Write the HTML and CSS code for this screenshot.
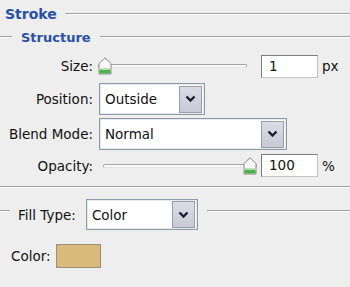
FILE: index.html
```html
<!DOCTYPE html>
<html lang="en">
<head>
    <meta charset="UTF-8">
    <title>Stroke</title>
    <link rel="stylesheet" href="styles.css">
</head>
<body>
    <div class="panel">
        <div class="group-title">
            <span>Stroke</span>
            <div class="rule"></div>
        </div>
        <div class="sub-title">
            <div class="rule lead"></div>
            <span>Structure</span>
            <div class="rule"></div>
        </div>

        <div class="row row-size">
            <label class="label">Size:</label>
            <div class="slider slider-size">
                <div class="track"></div>
                <svg class="thumb thumb-start" width="14" height="18" viewBox="0 0 14 18">
                    <path d="M7 0.8 L13 6.5 L13 17 L1 17 L1 6.5 Z" fill="#f6f6f6" stroke="#8a8a8a"/>
                    <rect x="1.5" y="12.5" width="11" height="4" fill="#4caf4a"/>
                    <rect x="1.5" y="11" width="11" height="1.5" fill="#bfe3b8"/>
                </svg>
            </div>
            <div class="num-box">1</div>
            <span class="unit">px</span>
        </div>

        <div class="row row-select">
            <label class="label">Position:</label>
            <div class="select select-position">
                <span>Outside</span>
                <div class="drop-btn">
                    <svg width="11" height="8" viewBox="0 0 11 8"><path d="M1.5 1.5 L5.5 5.5 L9.5 1.5" fill="none" stroke="#1a2030" stroke-width="2.4"/></svg>
                </div>
            </div>
        </div>

        <div class="row row-select row-blend">
            <label class="label">Blend Mode:</label>
            <div class="select select-blend">
                <span>Normal</span>
                <div class="drop-btn">
                    <svg width="11" height="8" viewBox="0 0 11 8"><path d="M1.5 1.5 L5.5 5.5 L9.5 1.5" fill="none" stroke="#1a2030" stroke-width="2.4"/></svg>
                </div>
            </div>
        </div>

        <div class="row row-opacity">
            <label class="label">Opacity:</label>
            <div class="slider slider-opacity">
                <div class="track"></div>
                <svg class="thumb thumb-end" width="14" height="18" viewBox="0 0 14 18">
                    <path d="M7 0.8 L13 6.5 L13 17 L1 17 L1 6.5 Z" fill="#f6f6f6" stroke="#8a8a8a"/>
                    <rect x="1.5" y="12.5" width="11" height="4" fill="#4caf4a"/>
                    <rect x="1.5" y="11" width="11" height="1.5" fill="#bfe3b8"/>
                </svg>
            </div>
            <div class="num-box">100</div>
            <span class="unit">%</span>
        </div>

        <div class="separator"></div>

        <div class="fill-row">
            <div class="rule lead"></div>
            <label class="fill-label">Fill Type:</label>
            <div class="select select-fill">
                <span>Color</span>
                <div class="drop-btn">
                    <svg width="11" height="8" viewBox="0 0 11 8"><path d="M1.5 1.5 L5.5 5.5 L9.5 1.5" fill="none" stroke="#1a2030" stroke-width="2.4"/></svg>
                </div>
            </div>
            <div class="rule"></div>
        </div>

        <div class="color-row">
            <label class="color-label">Color:</label>
            <div class="swatch"></div>
        </div>
    </div>
</body>
</html>
```

FILE: styles.css
```css
* {
    margin: 0;
    padding: 0;
    box-sizing: border-box;
}

body {
    background: #eeeeee;
    font-family: "DejaVu Sans", Verdana, sans-serif;
    font-size: 13.5px;
    color: #111111;
    width: 350px;
    height: 287px;
    overflow: hidden;
}

.panel {
    display: flex;
    flex-direction: column;
}

/* group headers */
.group-title,
.sub-title {
    display: flex;
    align-items: center;
    color: #2850a8;
    font-weight: bold;
}

.group-title {
    height: 28px;
    padding-left: 5px;
    font-size: 14px;
}

.group-title span {
    margin-right: 8px;
}

.sub-title {
    height: 18px;
    font-size: 13px;
}

.sub-title span {
    margin: 0 9px 0 9px;
}

.rule {
    flex: 1;
    height: 2px;
    border-top: 1px solid #a2a2a2;
    border-bottom: 1px solid #ffffff;
}

.rule.lead {
    flex: none;
    width: 12px;
}

/* form rows */
.row {
    display: flex;
    align-items: center;
}

.label {
    width: 93px;
    text-align: right;
    flex: none;
}

.row-size {
    height: 24px;
    margin-top: 8px;
}

.row-select {
    height: 32px;
    margin-top: 5px;
}

.row-blend {
    margin-top: 3px;
}

.row-opacity {
    height: 23px;
    margin-top: 4px;
}

.slider {
    position: relative;
    height: 18px;
    display: flex;
    align-items: center;
}

.slider-size {
    width: 149px;
    margin-left: 5px;
    margin-right: 14px;
}

.slider-opacity {
    width: 154px;
    margin-left: 10px;
    margin-right: 4px;
}

.track {
    width: 100%;
    height: 4px;
    border: 1px solid #a4a4a4;
    border-bottom-color: #e4e4e4;
    background: #f7f7f7;
    border-radius: 2px;
}

.thumb {
    position: absolute;
    top: 0;
}

.thumb-start {
    left: 0;
}

.thumb-end {
    right: 0;
}

.num-box {
    width: 57px;
    height: 23px;
    background: #ffffff;
    border: 1px solid #7c7c7c;
    border-right-color: #c4c4c4;
    border-bottom-color: #c4c4c4;
    padding-left: 7px;
    line-height: 21px;
}

.unit {
    margin-left: 4px;
}

/* dropdowns */
.select {
    display: flex;
    align-items: center;
    justify-content: space-between;
    height: 32px;
    background: #ffffff;
    border: 1px solid #8e98a6;
    box-shadow: inset 0 0 0 1px #e6e9ee;
    padding: 0 2px 0 5px;
}

.select-position {
    width: 106px;
    margin-left: 6px;
}

.select-blend {
    width: 188px;
    margin-left: 6px;
}

.drop-btn {
    width: 23px;
    height: 27px;
    display: flex;
    align-items: center;
    justify-content: center;
    background: linear-gradient(#dcdce6, #c9c9d6);
    border: 1px solid #9a9cab;
}

/* fill type */
.separator {
    height: 2px;
    margin-top: 9px;
    border-top: 1px solid #a2a2a2;
    border-bottom: 1px solid #ffffff;
}

.fill-row {
    display: flex;
    align-items: center;
    height: 31px;
    margin-top: 11px;
}

.fill-label {
    margin-left: 8px;
    margin-right: 10px;
}

.select-fill {
    width: 112px;
    height: 31px;
    margin-right: 9px;
}

.fill-row .rule {
    margin-top: -7px;
}

.fill-row .rule.lead {
    width: 10px;
}

.color-row {
    display: flex;
    align-items: center;
    margin-top: 14px;
    padding-left: 11px;
}

.swatch {
    width: 45px;
    height: 24px;
    margin-left: 5px;
    background: #d9ba7c;
    border: 1px solid #999080;
}
```
